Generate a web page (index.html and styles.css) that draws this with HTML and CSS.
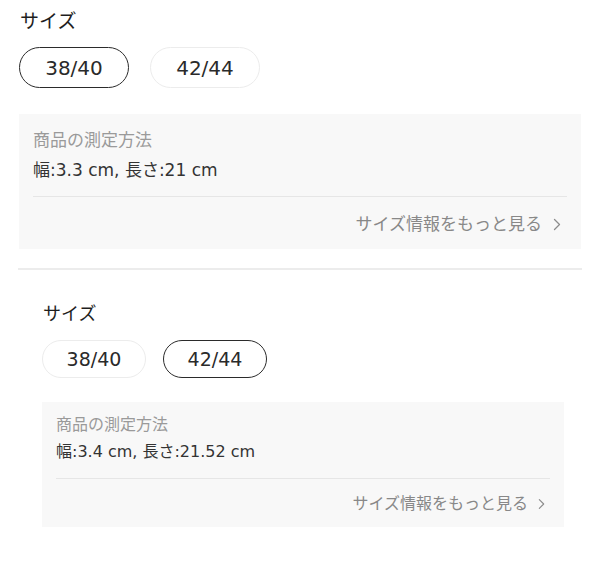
FILE: index.html
```html
<!DOCTYPE html>
<html lang="ja">
<head>
  <meta charset="UTF-8">
  <title>サイズ</title>
  <link rel="stylesheet" href="styles.css">
</head>
<body>
  <div class="page">
    <div class="size-block">
      <div class="size-label">サイズ</div>
      <div class="chips">
        <span class="chip selected">38/40</span>
        <span class="chip">42/44</span>
      </div>
      <div class="measure-box">
        <div class="measure-title">商品の測定方法</div>
        <div class="measure-value">幅:3.3 cm, 長さ:21 cm</div>
        <div class="measure-line"></div>
        <div class="more-link">
          サイズ情報をもっと見る
          <svg class="chevron" viewBox="0 0 8 13" width="8" height="13"><path d="M1.5 1.5 L6.5 6.5 L1.5 11.5" fill="none" stroke="currentColor" stroke-width="1.3" stroke-linecap="round" stroke-linejoin="round"/></svg>
        </div>
      </div>
    </div>

    <div class="split"></div>

    <div class="size-block small">
      <div class="size-label">サイズ</div>
      <div class="chips">
        <span class="chip">38/40</span>
        <span class="chip selected">42/44</span>
      </div>
      <div class="measure-box">
        <div class="measure-title">商品の測定方法</div>
        <div class="measure-value">幅:3.4 cm, 長さ:21.52 cm</div>
        <div class="measure-line"></div>
        <div class="more-link">
          サイズ情報をもっと見る
          <svg class="chevron" viewBox="0 0 8 13" width="7" height="12"><path d="M1.5 1.5 L6.5 6.5 L1.5 11.5" fill="none" stroke="currentColor" stroke-width="1.3" stroke-linecap="round" stroke-linejoin="round"/></svg>
        </div>
      </div>
    </div>
  </div>
</body>
</html>
```

FILE: styles.css
```css
body {
  margin: 0;
  padding: 0;
  background: #fff;
  font-family: "DejaVu Sans", "Noto Sans CJK JP", sans-serif;
  color: #222;
}

.page {
  width: 600px;
  height: 576px;
  overflow: hidden;
  background: #fff;
}

.size-block {
  padding: 9px 19px 0 19px;
}

.size-label {
  font-size: 19px;
  line-height: 24px;
  color: #1e1e1e;
  padding-left: 1px;
}

.chips {
  display: flex;
  gap: 21px;
  margin-top: 14px;
}

.chip {
  box-sizing: border-box;
  width: 110px;
  height: 41px;
  border: 1.5px solid #ececec;
  border-radius: 21px;
  display: flex;
  align-items: center;
  justify-content: center;
  font-size: 20px;
  color: #2a2a2a;
}

.chip.selected {
  border-color: #2b2b2b;
}

.measure-box {
  margin-top: 26px;
  background: #f8f8f8;
  padding: 15px 14px 13px 14px;
}

.measure-title {
  font-size: 17px;
  line-height: 22px;
  color: #9a9a9a;
}

.measure-value {
  font-size: 17px;
  line-height: 24px;
  margin-top: 7px;
  color: #333;
}

.measure-line {
  height: 1px;
  background: #e6e6e6;
  margin-top: 14px;
}

.more-link {
  margin-top: 15px;
  line-height: 24px;
  font-size: 17px;
  color: #888;
  display: flex;
  justify-content: flex-end;
  align-items: center;
  gap: 11px;
  padding-right: 6px;
}

.chevron {
  display: block;
  color: #8c8c8c;
}

.split {
  height: 2px;
  background: #ececec;
  margin: 19px 18px 0 18px;
}

/* second, slightly smaller copy */
.size-block.small {
  padding: 33px 36px 0 42px;
}

.small .size-label {
  font-size: 18px;
  line-height: 22px;
}

.small .chips {
  gap: 17px;
  margin-top: 15px;
}

.small .chip {
  width: 104px;
  height: 38px;
  font-size: 19px;
  border-radius: 19px;
}

.small .measure-box {
  margin-top: 24px;
  padding: 13px 14px 12px 14px;
}

.small .measure-title {
  font-size: 16px;
  line-height: 20px;
}

.small .measure-value {
  font-size: 16px;
  line-height: 22px;
  margin-top: 6px;
}

.small .measure-line {
  margin-top: 15px;
}

.small .more-link {
  font-size: 16px;
  line-height: 22px;
  margin-top: 14px;
  gap: 10px;
  padding-right: 5px;
}
```
